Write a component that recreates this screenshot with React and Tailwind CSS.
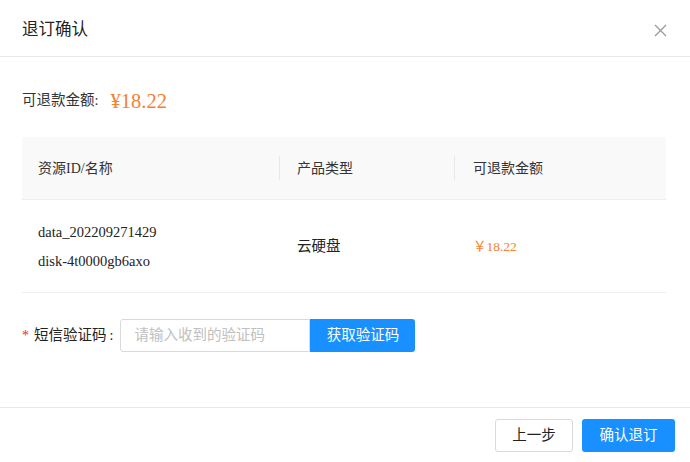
import React from 'react';

const font = { fontFamily: '"Liberation Serif", "Noto Sans CJK SC", serif' };

export default function App() {
  return (
    <div className="w-[690px] h-[462px] bg-white flex flex-col text-[#333]" style={font}>
      {/* Header */}
      <div className="h-[57px] flex items-center justify-between pl-[22px] pr-[23px] pt-[4px] border-b border-[#e8e8e8]">
        <span className="text-[16.5px] text-[#222]">退订确认</span>
        <svg width="13" height="13" viewBox="0 0 13 13" className="text-[#999]">
          <path d="M1 1 L12 12 M12 1 L1 12" stroke="currentColor" strokeWidth="1.3" fill="none" />
        </svg>
      </div>

      {/* Body */}
      <div className="flex-1 px-[22px] pr-[24px]">
        <div className="flex items-center h-[24px] mt-[32px]">
          <span className="text-[14.5px] text-[#333]">可退款金额:</span>
          <span className="ml-[12px] text-[20.5px] text-[#f7812f]">¥18.22</span>
        </div>

        <div className="mt-[24px]">
          <div className="h-[63px] bg-[#f9f9f9] flex items-center border-b border-[#eeeeee] text-[14px] text-[#333]">
            <div className="w-[258px] pl-[16px] border-r border-[#e8e8e8] h-[24px] flex items-center">资源ID/名称</div>
            <div className="w-[175px] pl-[17px] border-r border-[#e8e8e8] h-[24px] flex items-center">产品类型</div>
            <div className="flex-1 pl-[18px]">可退款金额</div>
          </div>
          <div className="h-[93px] flex items-center border-b border-[#eeeeee] text-[14.5px] text-[#222]">
            <div className="w-[258px] pl-[16px] flex flex-col gap-[9px] leading-[20px]">
              <span>data_202209271429</span>
              <span>disk-4t0000gb6axo</span>
            </div>
            <div className="w-[175px] pl-[17px] pt-[2px] text-[14.5px]">云硬盘</div>
            <div className="flex-1 pl-[18px] pt-[2px] text-[13.5px] text-[#f7812f]">￥18.22</div>
          </div>
        </div>

        <div className="flex items-center mt-[26px] h-[33px]">
          <span className="text-[#f5222d] text-[14px] mr-[5px]">*</span>
          <span className="text-[14.5px] text-[#222]">短信验证码</span>
          <span className="text-[14px] text-[#222] ml-[3px]">:</span>
          <input
            placeholder="请输入收到的验证码"
            className="ml-[7px] w-[190px] h-[33px] border border-[#d9d9d9] rounded-l-[3px] px-[13px] text-[14.5px] placeholder-[#c0c0c0] outline-none"
            style={font}
          />
          <button className="w-[105px] h-[33px] bg-[#1890ff] text-white text-[14.5px] rounded-r-[3px]">获取验证码</button>
        </div>
      </div>

      {/* Footer */}
      <div className="h-[55px] border-t border-[#e8e8e8] flex items-start justify-end gap-[9px] pr-[15px] pt-[11px]">
        <button className="w-[78px] h-[33px] border border-[#d9d9d9] rounded-[3px] text-[14.5px] text-[#222] bg-white">上一步</button>
        <button className="w-[93px] h-[33px] bg-[#1890ff] rounded-[3px] text-[14.5px] text-white">确认退订</button>
      </div>
    </div>
  );
}
